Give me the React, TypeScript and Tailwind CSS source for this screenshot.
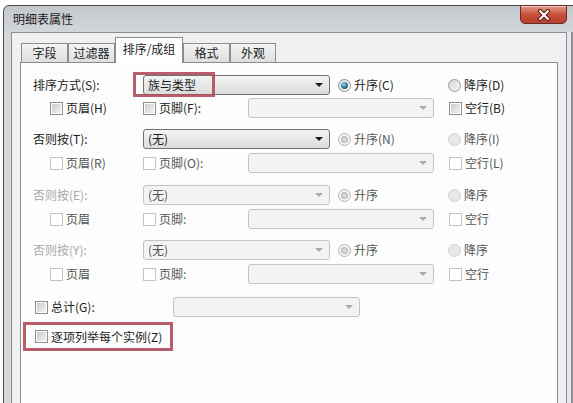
import React from "react";

type Tone = "dark" | "mid" | "light";
const ink: Record<Tone, string> = {
  dark: "text-[#1c1c1c]",
  mid: "text-[#555555]",
  light: "text-[#a8a8a8]",
};

function Box({ live }: { live?: boolean }) {
  if (live)
    return (
      <span className="flex h-[13px] w-[13px] shrink-0 items-center justify-center border border-[#8e8f8f] bg-white">
        <span className="h-[9px] w-[9px] bg-gradient-to-br from-[#c9ccd0] to-[#f3f3f3]" />
      </span>
    );
  return <span className="h-[13px] w-[13px] shrink-0 border border-[#c4c4c4] bg-white" />;
}

function Radio({ on, live }: { on?: boolean; live?: boolean }) {
  if (on && live)
    return (
      <span className="flex h-[13px] w-[13px] shrink-0 items-center justify-center rounded-full border border-[#8a8a8a] bg-gradient-to-br from-[#e4e4e4] to-[#fafafa]">
        <span className="h-[7px] w-[7px] rounded-full bg-[radial-gradient(circle_at_40%_35%,#9ad6ee,#2a7092_55%,#174a63)]" />
      </span>
    );
  if (on)
    return (
      <span className="flex h-[13px] w-[13px] shrink-0 items-center justify-center rounded-full border border-[#b4b4b4] bg-[#f4f4f4]">
        <span className="h-[7px] w-[7px] rounded-full border border-[#a8a8a8] bg-[#d8d8d8]" />
      </span>
    );
  return (
    <span
      className={`h-[13px] w-[13px] shrink-0 rounded-full border ${
        live ? "border-[#9a9a9a] bg-gradient-to-br from-[#d6d6d6] to-[#f6f6f6]" : "border-[#d2d2d2] bg-[#e8e8e8]"
      }`}
    />
  );
}

function Combo({ w, text, live, tone = "dark" }: { w: string; text?: string; live?: boolean; tone?: Tone }) {
  return (
    <div
      className={`flex h-[20px] shrink-0 items-center justify-between rounded-[3px] border pl-[4px] pr-[6px] ${w} ${
        live
          ? "border-[#707070] bg-gradient-to-b from-[#f4f4f4] to-[#dcdcdc]"
          : "border-[#c3c3c3] bg-[#f3f3f3]"
      }`}
    >
      <span className={ink[tone]}>{text}</span>
      <span
        className={`h-0 w-0 border-x-[4px] border-t-[4px] border-x-transparent ${
          live ? "border-t-[#1c1c1c]" : "border-t-[#ababab]"
        }`}
      />
    </div>
  );
}

function Main({
  label,
  tone,
  text,
  live,
  textTone,
  asc,
  desc,
  radioTone,
  radioLive,
  mark,
}: {
  label: string;
  tone: Tone;
  text: string;
  live?: boolean;
  textTone: Tone;
  asc: string;
  desc: string;
  radioTone: Tone;
  radioLive?: boolean;
  mark?: boolean;
}) {
  return (
    <div className="flex h-[20px] items-center pl-[12px]">
      <span className={`w-[110px] ${ink[tone]}`}>{label}</span>
      <div className="relative">
        <Combo w="w-[187px]" text={text} live={live} tone={textTone} />
        {mark && (
          <div className="pointer-events-none absolute left-[-10px] top-[-3px] h-[25px] w-[82px] border-[3px] border-[#b24b5a]/90" />
        )}
      </div>
      <div className="ml-[8px] flex w-[110px] items-center gap-[3px]">
        <Radio on live={radioLive} />
        <span className={ink[radioTone]}>{asc}</span>
      </div>
      <div className="flex items-center gap-[3px]">
        <Radio live={radioLive} />
        <span className={ink[radioTone]}>{desc}</span>
      </div>
    </div>
  );
}

function Sub({ head, foot, blank, tone, live }: { head: string; foot: string; blank: string; tone: Tone; live?: boolean }) {
  return (
    <div className="flex h-[20px] items-center pl-[29px]">
      <div className="flex w-[93px] items-center gap-[3px]">
        <Box live={live} />
        <span className={ink[tone]}>{head}</span>
      </div>
      <div className="flex w-[105px] items-center gap-[3px]">
        <Box live={live} />
        <span className={ink[tone]}>{foot}</span>
      </div>
      <Combo w="w-[186px]" />
      <div className="ml-[15px] flex items-center gap-[3px]">
        <Box live={live} />
        <span className={ink[tone]}>{blank}</span>
      </div>
    </div>
  );
}

function Tab({ label, active, w }: { label: string; active?: boolean; w: string }) {
  return active ? (
    <div className={`relative z-10 -mb-px flex h-[26px] items-start justify-center border border-b-0 border-[#898c95] bg-white pt-[3px] ${w}`}>
      {label}
    </div>
  ) : (
    <div className={`flex h-[19px] items-center justify-center border border-b-0 border-[#898c95] bg-gradient-to-b from-[#f4f4f4] to-[#dedede] ${w}`}>
      {label}
    </div>
  );
}

export default function App() {
  return (
    <div className="h-[403px] w-[573px] overflow-hidden bg-white font-['Noto_Sans_CJK_SC','Noto_Sans',sans-serif] text-[12px] leading-[16px] text-[#1c1c1c]">
      <div className="ml-[3px] mt-[5px] h-[410px] w-[580px] rounded-tl-[6px] border border-[#4d4f52] bg-gradient-to-b from-[#c3c7cb] to-[#d6d9dc] to-[30px]">
        <div className="flex h-[26px] items-start">
          <span className="pl-[9px] pt-[5px]">明细表属性</span>
          <div className="flex-1" />
          <div className="-mt-px mr-[15px] flex h-[19px] w-[47px] items-center justify-center rounded-b-[5px] border border-[#6e2b22] bg-gradient-to-b from-[#e09a8c] via-[#c9503b] to-[#b5402c] shadow-[inset_0_1px_0_rgba(255,255,255,0.5)]">
            <svg width="14" height="12" viewBox="0 0 14 12">
              <path d="M3 2 L11 10 M11 2 L3 10" stroke="#5a1c14" strokeWidth="4" strokeLinecap="round" />
              <path d="M3 2 L11 10 M11 2 L3 10" stroke="#ffffff" strokeWidth="2" strokeLinecap="round" />
            </svg>
          </div>
        </div>
        <div className="flex">
          <div className="w-[7px] shrink-0 bg-[#d6d9dc]" />
          <div className="h-[380px] w-[556px] shrink-0 border-l border-r border-t border-[#8b8f94] bg-[#f0f0f0] pl-[8px] pt-[4px]">
            <div className="flex h-[25px] items-end pl-px">
              <Tab label="字段" w="w-[47px]" />
              <Tab label="过滤器" w="w-[47px]" />
              <Tab label="排序/成组" active w="w-[68px]" />
              <Tab label="格式" w="w-[47px]" />
              <Tab label="外观" w="w-[46px]" />
            </div>
            <div className="h-[360px] w-[538px] border border-[#898c95] bg-[#fdfdfd] pt-[12px]">
              <Main label="排序方式(S):" tone="dark" text="族与类型" live textTone="dark" asc="升序(C)" desc="降序(D)" radioTone="dark" radioLive mark />
              <div className="mt-[3px]">
                <Sub head="页眉(H)" foot="页脚(F):" blank="空行(B)" tone="dark" live />
              </div>

              <div className="mt-[11px]">
                <Main label="否则按(T):" tone="dark" text="(无)" live textTone="dark" asc="升序(N)" desc="降序(I)" radioTone="mid" />
              </div>
              <div className="mt-[4px]">
                <Sub head="页眉(R)" foot="页脚(O):" blank="空行(L)" tone="mid" />
              </div>

              <div className="mt-[12px]">
                <Main label="否则按(E):" tone="light" text="(无)" textTone="mid" asc="升序" desc="降序" radioTone="mid" />
              </div>
              <div className="mt-[4px]">
                <Sub head="页眉" foot="页脚:" blank="空行" tone="mid" />
              </div>

              <div className="mt-[11px]">
                <Main label="否则按(Y):" tone="light" text="(无)" textTone="mid" asc="升序" desc="降序" radioTone="mid" />
              </div>
              <div className="mt-[4px]">
                <Sub head="页眉" foot="页脚:" blank="空行" tone="mid" />
              </div>

              <div className="mt-[13px] flex h-[20px] items-center pl-[14px]">
                <div className="flex w-[138px] items-center gap-[3px]">
                  <Box live />
                  <span>总计(G):</span>
                </div>
                <Combo w="w-[187px]" />
              </div>

              <div className="ml-[2px] mt-[5px] flex h-[29px] w-[150px] items-center gap-[3px] border-[3px] border-[#b24b5a]/90 pl-[9px]">
                <Box live />
                <span>逐项列举每个实例(Z)</span>
              </div>
            </div>
          </div>
          <div className="w-[4px] shrink-0 bg-[#e4e6e8]" />
          <div className="w-[3px] shrink-0 bg-[#8e9195]" />
        </div>
      </div>
    </div>
  );
}
